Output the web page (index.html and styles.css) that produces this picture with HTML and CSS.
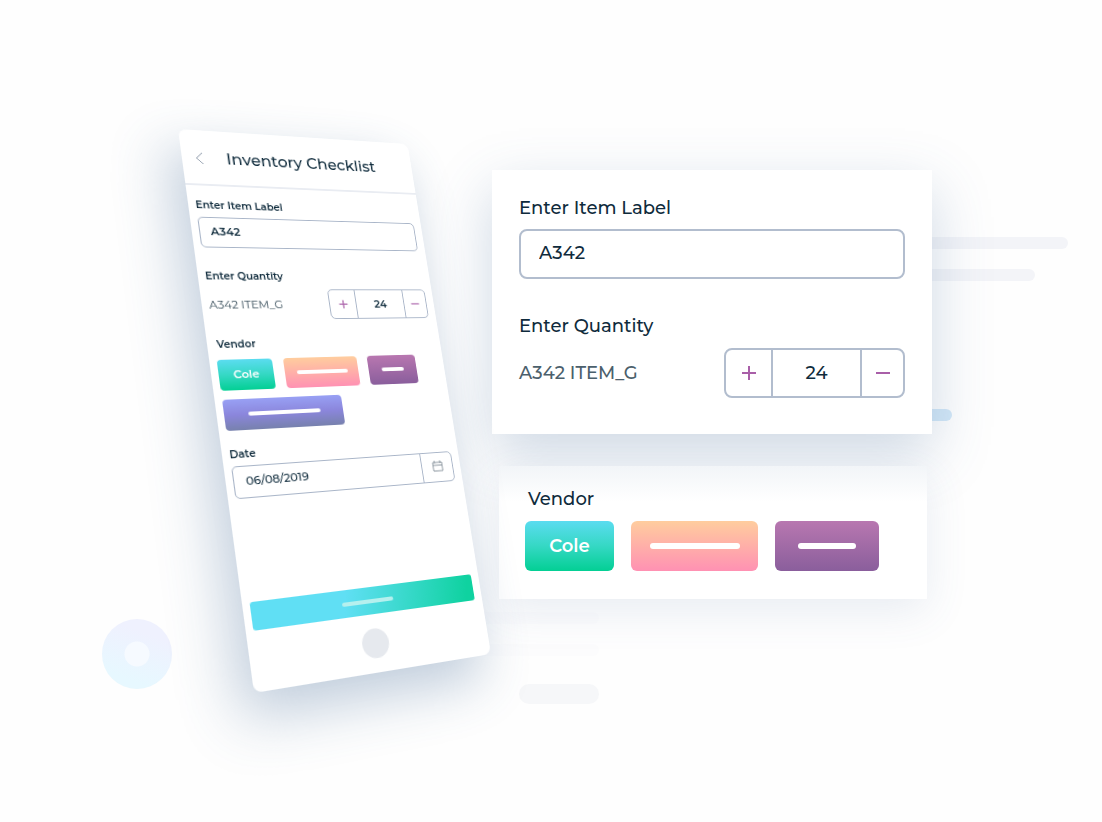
FILE: index.html
```html
<!DOCTYPE html>
<html lang="en">
<head>
<meta charset="utf-8">
<meta name="viewport" content="width=device-width, initial-scale=1">
<title>Inventory Checklist</title>
<link rel="stylesheet" href="styles.css">
</head>
<body>
<main class="scene">
  <span class="orb"></span>
  <section class="phone">
    <header class="phone-header">
      <button class="back" type="button" aria-label="Back">
        <svg viewBox="0 0 8 14" width="8" height="14"><path d="M7 1 1 7l6 6"/></svg>
      </button>
      <h1>Inventory Checklist</h1>
    </header>
    <form class="phone-form">
      <label for="p-item">Enter Item Label</label>
      <input class="field" id="p-item" type="text" value="A342">
      <label class="spaced" for="p-qty">Enter Quantity</label>
      <div class="quantity">
        <span class="item">A342 ITEM_G</span>
        <div class="stepper">
          <button type="button" aria-label="Increase"><svg viewBox="0 0 16 16"><path d="M8 1v14M1 8h14"/></svg></button>
          <input id="p-qty" type="text" value="24">
          <button type="button" aria-label="Decrease"><svg viewBox="0 0 16 16"><path d="M1 8h14"/></svg></button>
        </div>
      </div>
      <h2>Vendor</h2>
      <div class="vendors">
        <button class="chip teal" type="button">Cole</button>
        <button class="chip peach" type="button" aria-label="Vendor two"><span></span></button>
        <button class="chip plum" type="button" aria-label="Vendor three"><span></span></button>
        <button class="chip indigo" type="button" aria-label="Vendor four"><span></span></button>
      </div>
      <label for="p-date">Date</label>
      <div class="date">
        <input id="p-date" type="text" value="06/08/2019">
        <button type="button" aria-label="Open calendar">
          <svg viewBox="0 0 12 12" width="12" height="12"><path d="M1 2h10v9H1zM1 5h10M3 0v3M9 0v3"/></svg>
        </button>
      </div>
      <button class="submit" type="button" aria-label="Submit"><span></span></button>
    </form>
    <button class="home" type="button" aria-label="Home"></button>
  </section>

  <div class="cards">
    <span class="bar bar-one"></span>
    <span class="bar bar-two"></span>
    <span class="bar bar-blue"></span>
    <span class="bar bar-faint-one"></span>
    <span class="bar bar-faint-two"></span>
    <span class="bar bar-pill"></span>
    <section class="card">
      <label for="c-item">Enter Item Label</label>
      <input class="field" id="c-item" type="text" value="A342">
      <label class="spaced" for="c-qty">Enter Quantity</label>
      <div class="quantity">
        <span class="item">A342 ITEM_G</span>
        <div class="stepper">
          <button type="button" aria-label="Increase"><svg viewBox="0 0 16 16"><path d="M8 1v14M1 8h14"/></svg></button>
          <input id="c-qty" type="text" value="24">
          <button type="button" aria-label="Decrease"><svg viewBox="0 0 16 16"><path d="M1 8h14"/></svg></button>
        </div>
      </div>
    </section>
    <section class="card vendor-card">
      <h2>Vendor</h2>
      <div class="vendors">
        <button class="chip teal" type="button">Cole</button>
        <button class="chip peach" type="button" aria-label="Vendor two"><span></span></button>
        <button class="chip plum" type="button" aria-label="Vendor three"><span></span></button>
      </div>
    </section>
  </div>
</main>
</body>
</html>
```
FILE: styles.css
```css
* { box-sizing: border-box; }

body {
  margin: 0;
  background: #fefefe;
  color: #0f2b3c;
  font-family: Montserrat, Inter, sans-serif;
  font-weight: 500;
}

button, input {
  margin: 0;
  padding: 0;
  border: 0;
  background: none;
  color: inherit;
  font: inherit;
}

input { min-width: 0; }
h1, h2 { margin: 0; font: inherit; }
label, h2 { display: block; }
svg { display: block; fill: none; }

.scene {
  position: relative;
  display: flex;
  align-items: flex-start;
  gap: 74px;
  min-height: 100vh;
  padding: 129px 170px 100px 178px;
  overflow: hidden;
}

/* Shared controls */
.field {
  display: block;
  width: 100%;
  border: 2px solid #b2bdce;
  background: #fff;
}

.quantity {
  display: flex;
  align-items: center;
  justify-content: space-between;
}

.item { color: #4b606c; }

.stepper {
  display: grid;
  border: 2px solid #b2bdce;
  background: #fff;
}

.stepper button { display: grid; place-items: center; }
.stepper svg { width: 16px; height: 16px; stroke: #a95fa8; stroke-width: 2; }

.stepper input {
  width: 100%;
  border: solid #b2bdce;
  border-width: 0 2px;
  text-align: center;
}

.vendors { display: flex; flex-wrap: wrap; }

.chip {
  display: grid;
  place-items: center;
  height: 50px;
  border-radius: 6px;
  color: #fff;
  font-weight: 600;
}

.chip span { height: 6px; border-radius: 3px; background: #fff; }
.teal { background: linear-gradient(#5bdcf0, #35d8c4 50%, #03cf94); }
.peach { background: linear-gradient(#ffcd9e, #ff91b3); }
.plum { background: linear-gradient(#b877b0, #8a5e9c); }
.indigo { background: linear-gradient(#98a0f4, #8b86dc 50%, #7781ad); }

/* Large cards */
.cards {
  position: relative;
  isolation: isolate;
  flex: 1;
  min-width: 0;
  margin-top: 41px;
  font-size: 18px;
  line-height: 24px;
}

.card {
  padding: 26px 27px 36px;
  background: #fff;
  box-shadow: 0 20px 54px rgba(70, 110, 155, 0.26);
}

.card .field {
  height: 50px;
  margin-top: 9px;
  padding: 0 18px 3px;
  border-radius: 8px;
}

.card .spaced { margin-top: 35px; }
.card .quantity { margin-top: 10px; }

.card .stepper {
  grid-template-columns: 45px 91px 41px;
  height: 50px;
  border-radius: 8px;
}

.vendor-card {
  margin: 32px 5px 0 7px;
  padding: 21px 26px 28px;
  background: linear-gradient(#f2f5f8, #fff 36px);
  box-shadow: 0 12px 40px rgba(70, 110, 155, 0.12);
}

.vendor-card h2 { margin-left: 3px; }
.vendor-card .vendors { gap: 17px; margin-top: 10px; }
.vendor-card .teal { width: 89px; }
.vendor-card .peach { width: 127px; }
.vendor-card .plum { width: 104px; }
.vendor-card .peach span { width: 90px; }
.vendor-card .plum span { width: 58px; }

/* Phone, tilted in perspective */
.phone {
  position: relative;
  z-index: 1;
  flex: none;
  width: 240px;
  height: 560px;
  border-radius: 8px;
  background: #fff;
  box-shadow: -12px 22px 54px rgba(60, 100, 145, 0.32);
  font-size: 11px;
  line-height: 14px;
  transform-origin: 0 0;
  transform: matrix3d(
    1.05258, 0.068796, 0, 0.00041979,
    0.1266, 0.93952, 0, -0.00011989,
    0, 0, 1, 0,
    0, 0, 0, 1);
}

.phone-header {
  display: flex;
  align-items: center;
  gap: 22px;
  height: 59px;
  padding: 2px 13px 0;
  border-bottom: 2px solid #e9ecf2;
  font-size: 16px;
}

.back svg { stroke: #8e9aaa; }
.phone-form { padding: 14px 8px 0 7px; }
.phone label, .phone h2 { font-size: 10px; font-weight: 600; }

.phone .field {
  height: 32px;
  margin-top: 5px;
  padding: 0 10px 2px;
  border-width: 1px;
  border-color: #a9b5c8;
  border-radius: 5px;
  font-weight: 600;
}

.phone .spaced { margin-top: 23px; }
.phone .quantity { margin-top: 6px; }
.phone .item { font-weight: 400; color: #364c59; }

.phone .stepper {
  grid-template-columns: 27px 53px 24px;
  height: 32px;
  border-width: 1px;
  border-color: #a9b5c8;
  border-radius: 5px;
}

.phone .stepper svg { width: 10px; height: 10px; }
.phone .stepper input { border-width: 0 1px; border-color: #a9b5c8; font-weight: 600; }
.phone h2 { margin: 18px 0 0 2px; }
.phone .vendors { gap: 9px 11px; margin: 8px 0 17px; }
.phone .chip { height: 31px; padding-bottom: 1px; border-radius: 4px; }
.phone .chip span { height: 4px; border-radius: 2px; }
.phone .teal { width: 53px; }
.phone .peach { width: 75px; }
.phone .plum { width: 52px; }
.phone .indigo { width: 117px; }
.phone .peach span { width: 52px; }
.phone .plum span { width: 24px; }
.phone .indigo span { width: 71px; }

.date {
  display: grid;
  grid-template-columns: 1fr 34px;
  height: 32px;
  margin-top: 4px;
  border: 1px solid #a9b5c8;
  border-radius: 5px;
}

.date input { padding: 0 11px 2px; }
.date button { display: grid; place-items: center; padding-bottom: 2px; border-left: 1px solid #a9b5c8; }
.date svg { stroke: #8b969f; }

.submit {
  display: grid;
  place-items: center;
  width: 100%;
  height: 27px;
  margin-top: 99px;
  border-radius: 3px;
  background: linear-gradient(100deg, #60dff4 40%, #0fd2a0 96%);
}

.submit span { width: 52px; height: 4px; border-radius: 2px; background: #b5f0ee; }

.home {
  display: block;
  width: 27px;
  height: 29px;
  margin: 14px auto 0 108px;
  border-radius: 50%;
  background: #e6e9ee;
}

/* Background shapes */
.bar {
  position: absolute;
  z-index: -1;
  height: 12px;
  border-radius: 6px;
  background: #f3f4f8;
}

.bar-one { top: 67px; right: -136px; width: 240px; }
.bar-two { top: 99px; right: -103px; width: 200px; }
.bar-blue { top: 239px; right: -20px; width: 80px; background: #d3e8f8; }
.bar-faint-one, .bar-faint-two { left: -60px; width: 167px; background: #fcfcfd; }
.bar-faint-one { top: 442px; }
.bar-faint-two { top: 474px; }
.bar-pill { top: 514px; left: 27px; width: 80px; height: 20px; border-radius: 10px; background: #f6f7f9; }

.orb {
  position: absolute;
  top: 619px;
  left: 102px;
  width: 70px;
  height: 70px;
  border-radius: 50%;
  background:
    radial-gradient(circle, #f6faff 12px, transparent 13px),
    linear-gradient(200deg, #eff1fe 25%, #e7f8ff 80%);
}
```
